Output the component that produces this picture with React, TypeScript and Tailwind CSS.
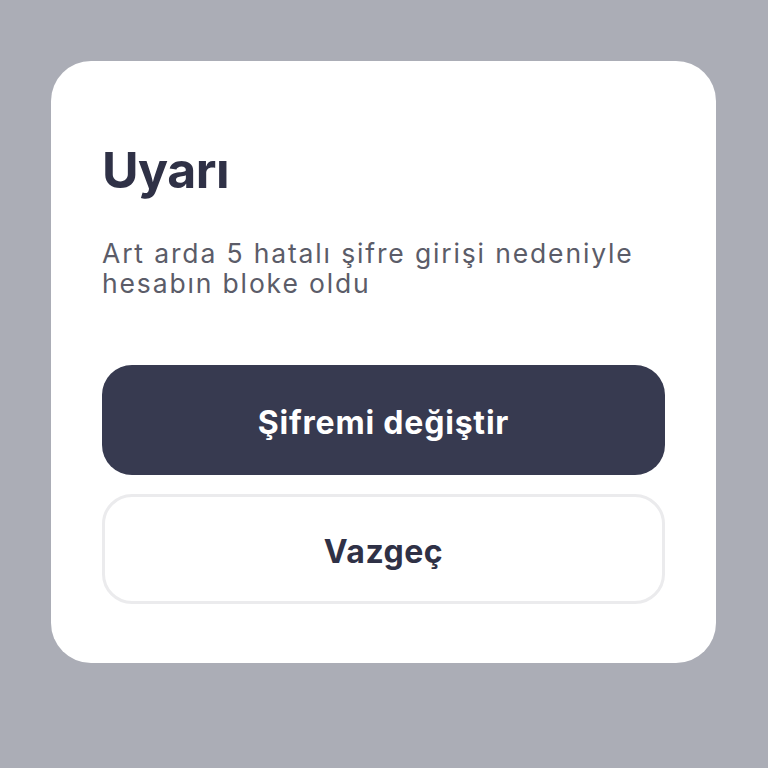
export default function App() {
  return (
    <div className="flex h-[768px] w-[768px] flex-col bg-[#abadb6] px-[51px] pt-[61px] font-['Inter',sans-serif]">
      <div className="flex h-[602px] w-[665px] flex-col rounded-[40px] bg-white px-[51px] pt-[78px]">
        <h1 className="text-[50px] font-bold leading-[62px] tracking-[-0.5px] text-[#2f3146]">Uyarı</h1>
        <p className="mt-[37px] text-[26.5px] leading-[30px] tracking-[1.85px] text-[#5b5c68]">
          Art arda 5 hatalı şifre girişi nedeniyle
          <br />
          hesabın bloke oldu
        </p>
        <button className="mt-[67px] flex h-[110px] w-full items-center justify-center rounded-[30px] bg-[#373a50] pt-[6px] text-[32px] font-bold tracking-[0.8px] text-white">
          Şifremi değiştir
        </button>
        <button className="mt-[19px] flex h-[110px] w-full items-center justify-center rounded-[30px] border-[3px] border-[#ebebed] bg-white pt-[6px] text-[32px] font-bold tracking-[0.5px] text-[#2f3146]">
          Vazgeç
        </button>
      </div>
    </div>
  )
}
